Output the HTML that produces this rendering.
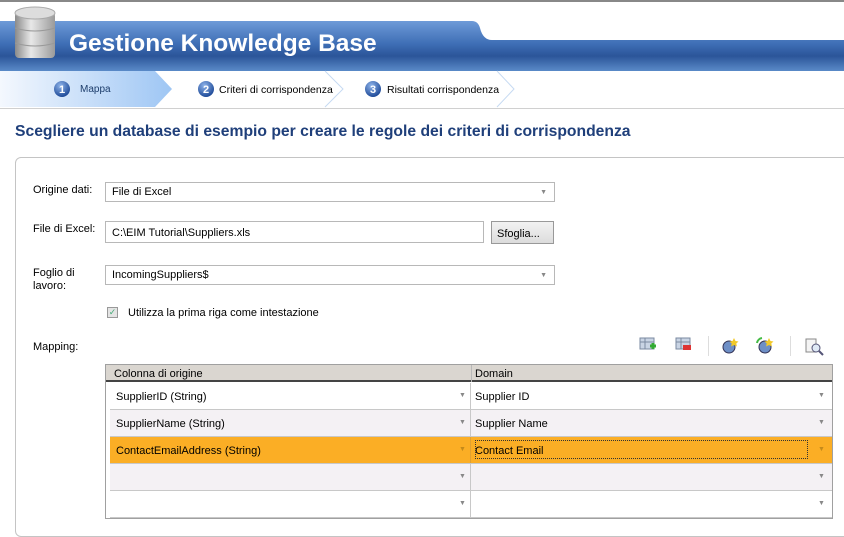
<!DOCTYPE html>
<html><head><meta charset="utf-8"><style>
*{margin:0;padding:0;box-sizing:border-box}
body{width:844px;height:525px;overflow:hidden;background:#fff;font-family:"Liberation Sans",Arial,sans-serif;font-size:11px;color:#000;position:relative}
.abs{position:absolute}
.sel{position:absolute;border:1px solid #b8b8b8;background:#fff;height:20px;padding:3px 0 0 6px;font-size:11px}
.sel .ar{position:absolute;right:7px;top:6px;font-size:7px;color:#888}
.lbl{position:absolute;font-size:11px}
.row{position:absolute;left:110px;width:722px;height:27px;border-bottom:1px solid #c8c8c8}
.row .c1{position:absolute;left:0;top:0;width:361px;height:26px;border-right:1px solid #c8c8c8;padding:8px 0 0 6px}
.row .c2{position:absolute;left:361px;top:0;width:361px;height:26px;padding:8px 0 0 4px}
.dd{position:absolute;font-size:7px;color:#888;top:9px}
</style></head><body>
<div class="abs" style="left:0;top:0;width:844px;height:2px;background:#888"></div>
<svg class="abs" style="left:0;top:0" width="844" height="110">
<defs>
<linearGradient id="bl" x1="0" y1="0" x2="0" y2="1"><stop offset="0" stop-color="#6e9bd8"/><stop offset="0.45" stop-color="#3f6fb6"/><stop offset="0.7" stop-color="#2b5599"/><stop offset="1" stop-color="#5a8ac8"/></linearGradient>
<linearGradient id="st" x1="0" y1="0" x2="1" y2="0"><stop offset="0" stop-color="#f4f8fe"/><stop offset="1" stop-color="#9ec6f4"/></linearGradient>
<linearGradient id="cy" x1="0" y1="0" x2="1" y2="0"><stop offset="0" stop-color="#8a8a8a"/><stop offset="0.4" stop-color="#e8e8e8"/><stop offset="1" stop-color="#9a9a9a"/></linearGradient>
<radialGradient id="ci" cx="0.4" cy="0.3" r="0.7"><stop offset="0" stop-color="#8fb4ea"/><stop offset="1" stop-color="#1e4a98"/></radialGradient>
</defs>
<path d="M0 21 H472 Q478 21 480 28 Q483 40 492 40 H844 V71 H0 Z" fill="url(#bl)"/>
<path d="M0 71 H155 L172 89 L155 107 H0 Z" fill="url(#st)"/>
<path d="M325 71 L343 89 L325 107 M497 71 L514 89 L497 107" stroke="#c6daf2" fill="none"/>
<line x1="0" y1="108.5" x2="844" y2="108.5" stroke="#d0d0d0"/>
<rect x="15" y="12" width="40" height="46" rx="4" fill="url(#cy)"/>
<ellipse cx="35" cy="13" rx="20" ry="6" fill="#ddd" stroke="#aaa"/>
<path d="M15 28 Q35 34 55 28 M15 43 Q35 49 55 43" stroke="#999" fill="none"/>
<circle cx="62" cy="89" r="8" fill="url(#ci)"/><text x="62" y="93" fill="#fff" font-size="11" font-weight="bold" text-anchor="middle" font-family="Liberation Sans">1</text>
<circle cx="206" cy="89" r="8" fill="url(#ci)"/><text x="206" y="93" fill="#fff" font-size="11" font-weight="bold" text-anchor="middle" font-family="Liberation Sans">2</text>
<circle cx="373" cy="89" r="8" fill="url(#ci)"/><text x="373" y="93" fill="#fff" font-size="11" font-weight="bold" text-anchor="middle" font-family="Liberation Sans">3</text>
</svg>
<div class="abs" style="left:69px;top:30px;font-size:24.5px;font-weight:bold;color:#fff">Gestione Knowledge Base</div>
<div class="abs" style="left:80px;top:84px;font-size:10px;color:#1d3d6b">Mappa</div>
<div class="abs" style="left:219px;top:84px;font-size:10.5px">Criteri di corrispondenza</div>
<div class="abs" style="left:387px;top:84px;font-size:10.5px">Risultati corrispondenza</div>
<div class="abs" style="left:15px;top:123px;font-size:15.7px;font-weight:bold;color:#1f3f7a">Scegliere un database di esempio per creare le regole dei criteri di corrispondenza</div>
<div class="abs" style="left:15px;top:157px;width:840px;height:380px;border:1px solid #c4c4c4;border-radius:6px"></div>
<div class="lbl" style="left:33px;top:184px">Origine dati:</div>
<div class="sel" style="left:105px;top:182px;width:450px">File di Excel<span class="ar">▼</span></div>
<div class="lbl" style="left:33px;top:223px">File di Excel:</div>
<div class="sel" style="left:105px;top:221px;width:379px;height:22px;padding-top:5px">C:\EIM Tutorial\Suppliers.xls</div>
<div class="abs" style="left:491px;top:221px;width:63px;height:23px;border:1px solid #999;background:linear-gradient(#f2f2f2,#dcdcdc);padding:6px 0 0 5px;font-size:11px">Sfoglia...</div>
<div class="lbl" style="left:33px;top:267px;line-height:13px">Foglio di<br>lavoro:</div>
<div class="sel" style="left:105px;top:265px;width:450px">IncomingSuppliers$<span class="ar">▼</span></div>
<div class="abs" style="left:107px;top:307px;width:11px;height:11px;border:1px solid #999;background:#e4e4e4;font-size:9px;color:#4a7;line-height:9px;text-align:center">✓</div>
<div class="lbl" style="left:128px;top:307px">Utilizza la prima riga come intestazione</div>
<div class="lbl" style="left:33px;top:341px">Mapping:</div>
<svg class="abs" style="left:636px;top:334px" width="200" height="24">
<rect x="4" y="4" width="14" height="11" fill="#c9d4e4" stroke="#7a8aa0"/><path d="M4 8H18M9 4V15" stroke="#7a8aa0"/><path d="M14 12h6M17 9v6" stroke="#3a3" stroke-width="3"/>
<rect x="40" y="4" width="14" height="11" fill="#c9d4e4" stroke="#7a8aa0"/><path d="M40 8H54M45 4V15" stroke="#7a8aa0"/><rect x="47" y="11" width="8" height="5" fill="#d33"/>
<line x1="72.5" y1="2" x2="72.5" y2="22" stroke="#ddd"/>
<circle cx="93" cy="13" r="6" fill="#6e8fc6" stroke="#335"/><path d="M98 4l1.5 3 3 .5-2.2 2 .6 3-2.9-1.5-2.9 1.5.6-3-2.2-2 3-.5z" fill="#f2c92a"/>
<circle cx="129" cy="13" r="6" fill="#6e8fc6" stroke="#335"/><path d="M121 9a6 6 0 0 1 5-5" stroke="#4b4" stroke-width="2" fill="none"/><path d="M133 4l1.5 3 3 .5-2.2 2 .6 3-2.9-1.5-2.9 1.5.6-3-2.2-2 3-.5z" fill="#f2c92a"/>
<line x1="154.5" y1="2" x2="154.5" y2="22" stroke="#ddd"/>
<rect x="170" y="5" width="10" height="13" fill="#f4f4f4" stroke="#888"/><circle cx="180" cy="14" r="4" fill="#dfe9f5" stroke="#557"/><path d="M183 17l4 4" stroke="#557" stroke-width="2"/>
</svg>
<div class="abs" style="left:105px;top:364px;width:728px;height:155px;border:1px solid #a0a0a0;background:#fff"></div>
<div class="abs" style="left:106px;top:365px;width:726px;height:17px;background:#dad6d0;border-bottom:2px solid #444"></div>
<div class="abs" style="left:114px;top:368px">Colonna di origine</div>
<div class="abs" style="left:471px;top:365px;width:1px;height:17px;background:#b8b8b8"></div>
<div class="abs" style="left:475px;top:368px">Domain</div>
<div class="abs" style="left:110px;top:383px;width:2px;height:135px;background:#555"></div>
<div class="row" style="top:383px;background:#fff"><div class="c1">SupplierID (String)<span class="dd" style="left:349px">▼</span></div><div class="c2">Supplier ID<span class="dd" style="left:347px">▼</span></div></div>
<div class="row" style="top:410px;background:#f4f1f4"><div class="c1">SupplierName (String)<span class="dd" style="left:349px">▼</span></div><div class="c2">Supplier Name<span class="dd" style="left:347px">▼</span></div></div>
<div class="row" style="top:437px;background:#fbae25"><div class="c1" style="border-right-color:#e0a030">ContactEmailAddress (String)<span class="dd" style="left:349px;color:#c58a1a">▼</span></div><div class="c2"><span class="abs" style="left:4px;top:3px;width:333px;height:19px;border:1px dotted #333"></span>Contact Email<span class="dd" style="left:347px;color:#c58a1a">▼</span></div></div>
<div class="row" style="top:464px;background:#f4f1f4"><div class="c1"><span class="dd" style="left:349px">▼</span></div><div class="c2"><span class="dd" style="left:347px">▼</span></div></div>
<div class="row" style="top:491px;background:#fff"><div class="c1"><span class="dd" style="left:349px">▼</span></div><div class="c2"><span class="dd" style="left:347px">▼</span></div></div>
</body></html>
